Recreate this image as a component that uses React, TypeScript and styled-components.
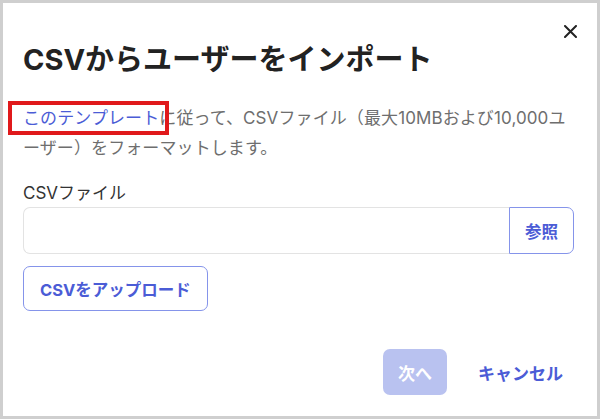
import React from 'react';
import styled, { createGlobalStyle } from 'styled-components';

const GlobalStyle = createGlobalStyle`
  html, body {
    margin: 0;
    padding: 0;
    background: #ffffff;
  }
  * {
    box-sizing: border-box;
  }
`;

const FONT = `'Inter', 'Noto Sans CJK JP', sans-serif`;
const BLUE = '#4b5cd6';
const BLUE_BORDER = '#8594ea';

const Frame = styled.div`
  position: relative;
  width: 600px;
  height: 419px;
  border: 3px solid #cfcfcf;
  background: #ffffff;
  padding: 0 23px 0 20px;
  display: flex;
  flex-direction: column;
  font-family: ${FONT};
`;

const CloseButton = styled.button`
  position: absolute;
  top: 17px;
  right: 16px;
  width: 22px;
  height: 22px;
  padding: 0;
  border: none;
  background: transparent;
  display: flex;
  align-items: center;
  justify-content: center;
  cursor: pointer;
`;

const Title = styled.h1`
  margin: 37px 0 0;
  font-size: 29px;
  line-height: 40px;
  font-weight: 700;
  color: #222222;
`;

const Description = styled.p`
  margin: 23px 0 0;
  font-size: 17px;
  line-height: 30px;
  color: #6e6e6e;
  letter-spacing: 0.1px;
`;

const TemplateLink = styled.a`
  position: relative;
  color: ${BLUE};
  text-decoration: none;
  &::after {
    content: '';
    position: absolute;
    left: -15px;
    right: -10px;
    top: -7px;
    bottom: -7px;
    border: 4px solid #e0191b;
    pointer-events: none;
  }
`;

const Label = styled.label`
  margin-top: 20px;
  font-size: 17px;
  line-height: 20px;
  color: #333333;
`;

const FileRow = styled.div`
  display: flex;
  margin-top: 4px;
  height: 47px;
`;

const FileInput = styled.div`
  flex: 1;
  border: 1px solid #e3e3e3;
  border-right: none;
  border-radius: 7px 0 0 7px;
`;

const BrowseButton = styled.button`
  width: 65px;
  border: 1px solid ${BLUE_BORDER};
  border-radius: 0 7px 7px 0;
  background: #ffffff;
  color: ${BLUE};
  font-family: ${FONT};
  font-size: 16.5px;
  font-weight: 700;
  cursor: pointer;
`;

const OutlineButton = styled.button`
  align-self: flex-start;
  margin-top: 12px;
  height: 45px;
  padding: 0 16px;
  border: 1px solid ${BLUE_BORDER};
  border-radius: 7px;
  background: #ffffff;
  color: ${BLUE};
  font-family: ${FONT};
  font-size: 16.5px;
  font-weight: 700;
  cursor: pointer;
`;

const Footer = styled.div`
  display: flex;
  justify-content: flex-end;
  align-items: center;
  gap: 20px;
  margin-top: 38px;
`;

const FooterButton = styled.button<{ $primary?: boolean }>`
  height: 46px;
  padding: 0 ${({ $primary }) => ($primary ? '15px' : '11px')};
  border: none;
  border-radius: 7px;
  background: ${({ $primary }) => ($primary ? '#b9c2f0' : 'transparent')};
  color: ${({ $primary }) => ($primary ? '#ffffff' : BLUE)};
  font-family: ${FONT};
  font-size: 17px;
  font-weight: 700;
  cursor: ${({ $primary }) => ($primary ? 'default' : 'pointer')};
`;

const App = () => {
  return (
    <>
      <GlobalStyle />
      <Frame>
        <CloseButton aria-label="閉じる">
          <svg width="13" height="13" viewBox="0 0 13 13">
            <path
              d="M1 1 L12 12 M12 1 L1 12"
              stroke="#222222"
              strokeWidth="2"
              strokeLinecap="round"
            />
          </svg>
        </CloseButton>
        <Title>CSVからユーザーをインポート</Title>
        <Description>
          <TemplateLink href="#">このテンプレート</TemplateLink>
          に従って、CSVファイル（最大10MBおよび10,000ユ
          <br />
          ーザー）をフォーマットします。
        </Description>
        <Label>CSVファイル</Label>
        <FileRow>
          <FileInput />
          <BrowseButton>参照</BrowseButton>
        </FileRow>
        <OutlineButton>CSVをアップロード</OutlineButton>
        <Footer>
          <FooterButton $primary disabled>
            次へ
          </FooterButton>
          <FooterButton>キャンセル</FooterButton>
        </Footer>
      </Frame>
    </>
  );
};

export default App;
